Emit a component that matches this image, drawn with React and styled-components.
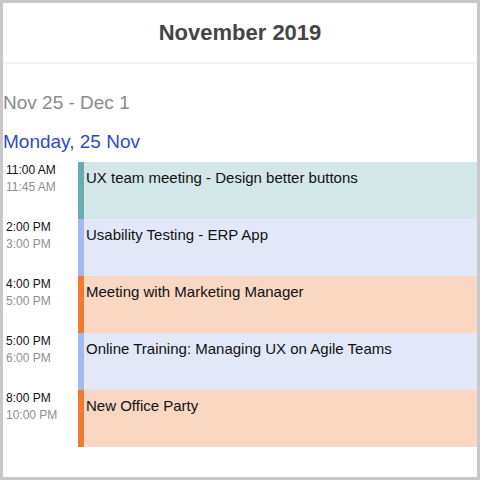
import React from "react";
import styled, { createGlobalStyle } from "styled-components";

const events = [
  { start: "11:00 AM", end: "11:45 AM", title: "UX team meeting - Design better buttons", kind: "teal" },
  { start: "2:00 PM", end: "3:00 PM", title: "Usability Testing - ERP App", kind: "blue" },
  { start: "4:00 PM", end: "5:00 PM", title: "Meeting with Marketing Manager", kind: "orange" },
  { start: "5:00 PM", end: "6:00 PM", title: "Online Training: Managing UX on Agile Teams", kind: "blue" },
  { start: "8:00 PM", end: "10:00 PM", title: "New Office Party", kind: "orange" },
];

const palette = {
  teal: { bar: "#6aabb0", bg: "#d3e7e8" },
  blue: { bar: "#a6b9ee", bg: "#e3e8f9" },
  orange: { bar: "#ee7b30", bg: "#f9d7c3" },
};

const App = () => {
  return (
    <>
      <GlobalStyle />
      <Frame>
        <Header>November 2019</Header>
        <Range>Nov 25 - Dec 1</Range>
        <DayTitle>Monday, 25 Nov</DayTitle>
        <Agenda>
          {events.map((ev) => (
            <EventRow key={ev.title}>
              <Times>
                <StartTime>{ev.start}</StartTime>
                <EndTime>{ev.end}</EndTime>
              </Times>
              <Bar $kind={ev.kind} />
              <EventBody $kind={ev.kind}>{ev.title}</EventBody>
            </EventRow>
          ))}
        </Agenda>
      </Frame>
    </>
  );
};

const GlobalStyle = createGlobalStyle`
  html, body {
    margin: 0;
    padding: 0;
    background: #ffffff;
  }
  * {
    box-sizing: border-box;
  }
`;

const Frame = styled.div`
  width: 480px;
  height: 480px;
  border: 3px solid #c8c8c8;
  background: #ffffff;
  font-family: "Liberation Sans", Arial, sans-serif;
  display: flex;
  flex-direction: column;
  overflow: hidden;
`;

const Header = styled.div`
  height: 61px;
  border-bottom: 2px solid #f3f3f3;
  display: flex;
  align-items: center;
  justify-content: center;
  font-size: 22px;
  font-weight: 700;
  color: #454545;
  padding-top: 1px;
`;

const Range = styled.div`
  margin-top: 28px;
  line-height: 22px;
  font-size: 19px;
  color: #8a8a8a;
`;

const DayTitle = styled.div`
  margin-top: 17px;
  line-height: 22px;
  font-size: 19px;
  color: #2f4bcb;
`;

const Agenda = styled.div`
  margin-top: 9px;
  display: flex;
  flex-direction: column;
`;

const EventRow = styled.div`
  display: grid;
  grid-template-columns: 75px 6px 1fr;
  height: 57px;
`;

const Times = styled.div`
  padding-left: 3px;
  display: flex;
  flex-direction: column;
  font-size: 12px;
  line-height: 17px;
`;

const StartTime = styled.span`
  color: #111111;
`;

const EndTime = styled.span`
  color: #8f8f8f;
`;

const Bar = styled.div`
  background: ${(p) => palette[p.$kind].bar};
`;

const EventBody = styled.div`
  background: ${(p) => palette[p.$kind].bg};
  padding: 7px 0 0 2px;
  font-size: 15px;
  line-height: 18px;
  color: #111111;
`;

export default App;
